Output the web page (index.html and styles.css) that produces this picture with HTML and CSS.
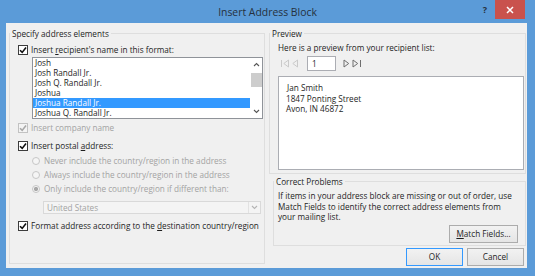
FILE: index.html
```html
<!DOCTYPE html>
<html lang="en">
<head>
  <meta charset="UTF-8">
  <meta name="viewport" content="width=device-width, initial-scale=1.0">
  <title>Insert Address Block</title>
  <link rel="stylesheet" href="styles.css">
</head>
<body>
<div class="window">
  <div class="titlebar">
    <div class="title">Insert Address Block</div>
    <button class="help">?</button>
    <button class="close">
      <svg width="8" height="8" viewBox="0 0 8 8"><path d="M1 1L7 7M7 1L1 7" stroke="#fff" stroke-width="1.5" fill="none"/></svg>
    </button>
  </div>

  <div class="content">
    <div class="col col-left">
      <fieldset class="group">
        <legend>Specify address elements</legend>

        <label class="check row-name">
          <span class="box"><svg viewBox="0 0 8 8"><path d="M1 4.2L3.2 6.4L7 1.4" stroke="#111" stroke-width="1.6" fill="none"/></svg></span>
          <span>Insert <u>r</u>ecipient's name in this format:</span>
        </label>

        <div class="listbox">
          <ul class="items">
            <li>Josh</li>
            <li>Josh Randall Jr.</li>
            <li>Josh Q. Randall Jr.</li>
            <li>Joshua</li>
            <li class="selected">Joshua Randall Jr.</li>
            <li>Joshua Q. Randall Jr.</li>
          </ul>
          <div class="scrollbar">
            <span class="arrow"><svg width="7" height="5" viewBox="0 0 7 5"><path d="M1 4L3.5 1.5L6 4" stroke="#555" stroke-width="1.1" fill="none"/></svg></span>
            <span class="thumb"></span>
            <span class="fill"></span>
            <span class="arrow"><svg width="7" height="5" viewBox="0 0 7 5"><path d="M1 1L3.5 3.5L6 1" stroke="#555" stroke-width="1.1" fill="none"/></svg></span>
          </div>
        </div>

        <label class="check disabled row-company">
          <span class="box"><svg viewBox="0 0 8 8"><path d="M1 4.2L3.2 6.4L7 1.4" stroke="#a8a8a8" stroke-width="1.6" fill="none"/></svg></span>
          <span>Insert company name</span>
        </label>

        <label class="check row-postal">
          <span class="box"><svg viewBox="0 0 8 8"><path d="M1 4.2L3.2 6.4L7 1.4" stroke="#111" stroke-width="1.6" fill="none"/></svg></span>
          <span>Insert postal <u>a</u>ddress:</span>
        </label>

        <div class="radios">
          <label class="radio"><span class="dot"></span><span>Never include the country/region in the address</span></label>
          <label class="radio"><span class="dot"></span><span>Always include the country/region in the address</span></label>
          <label class="radio"><span class="dot on"></span><span>Only include the country/region if different than:</span></label>
        </div>

        <div class="select">
          <span class="select-value">United States</span>
          <span class="select-arrow"><svg width="7" height="5" viewBox="0 0 7 5"><path d="M1 1L3.5 3.5L6 1" stroke="#b4b4b4" stroke-width="1.1" fill="none"/></svg></span>
        </div>

        <label class="check row-format">
          <span class="box"><svg viewBox="0 0 8 8"><path d="M1 4.2L3.2 6.4L7 1.4" stroke="#111" stroke-width="1.6" fill="none"/></svg></span>
          <span>Format address according to the <u>d</u>estination country/region</span>
        </label>
      </fieldset>
    </div>

    <div class="col col-right">
      <fieldset class="group preview-group">
        <legend>Preview</legend>
        <div class="note">Here is a preview from your recipient list:</div>
        <div class="nav">
          <svg class="nav-first" width="10" height="9" viewBox="0 0 10 9"><path d="M1.5 1V8" stroke="#cacaca" fill="none"/><path d="M8.5 1L3.8 4.5L8.5 8Z" stroke="#cacaca" fill="none"/></svg>
          <svg class="nav-prev" width="6" height="9" viewBox="0 0 6 9"><path d="M5.5 1L0.8 4.5L5.5 8Z" stroke="#cacaca" fill="none"/></svg>
          <span class="record">1</span>
          <svg class="nav-next" width="7" height="9" viewBox="0 0 7 9"><path d="M1 1L5.7 4.5L1 8Z" stroke="#6e6e6e" fill="none"/></svg>
          <svg class="nav-last" width="10" height="9" viewBox="0 0 10 9"><path d="M1 1L5.7 4.5L1 8Z" stroke="#6e6e6e" fill="none"/><path d="M8.5 1V8" stroke="#6e6e6e" fill="none"/></svg>
        </div>
        <div class="preview">
          <div class="first-line">Jan Smith</div>
          <div>1847 Ponting Street</div>
          <div>Avon, IN 46872</div>
        </div>
      </fieldset>

      <fieldset class="group problems">
        <legend>Correct Problems</legend>
        <p class="problems-text">If items in your address block are missing or out of order, use<br>Match Fields to identify the correct address elements from<br>your mailing list.</p>
        <div class="problems-actions">
          <button class="btn btn-match"><u>M</u>atch Fields...</button>
        </div>
      </fieldset>

      <div class="actions">
        <button class="btn btn-ok">OK</button>
        <button class="btn btn-cancel">Cancel</button>
      </div>
    </div>
  </div>
</div>
</body>
</html>
```

FILE: styles.css
```css
* {
  box-sizing: border-box;
}

body {
  margin: 0;
  font-family: "Open Sans", "Segoe UI", sans-serif;
  font-size: 8.2px;
  color: #1e1e1e;
}

u {
  text-decoration-thickness: 1px;
}

.window {
  width: 535px;
  height: 276px;
  background: #5b9bd8;
  display: flex;
  flex-direction: column;
  padding-bottom: 8px;
}

/* title bar */
.titlebar {
  height: 23px;
  flex-shrink: 0;
  display: flex;
}

.title {
  flex: 1;
  padding-left: 60px;
  text-align: center;
  font-size: 10.4px;
  line-height: 25px;
  color: #26313d;
}

.help {
  width: 20px;
  height: 19px;
  padding: 0;
  border: none;
  background: none;
  font: bold 9px "Open Sans", sans-serif;
  color: #26313d;
}

.close {
  width: 30px;
  height: 19px;
  margin-right: 10px;
  padding: 0;
  border: none;
  background: #c9524d;
  display: flex;
  align-items: center;
  justify-content: center;
}

/* dialog body */
.content {
  flex: 1;
  margin: 0 8px 0 6px;
  background: #f0f0f0;
  display: flex;
}

.col {
  display: flex;
  flex-direction: column;
}

.col-left {
  width: 259px;
}

.col-right {
  flex: 1;
}

.group {
  margin: 5px 0 0 3px;
  padding: 0;
  min-width: 0;
  border: 1px solid #dedede;
}

.group legend {
  padding: 0 2px;
  line-height: 11px;
}

.col-left .group {
  flex: 1;
  margin-bottom: 4px;
}

/* checkboxes */
.check {
  display: flex;
  align-items: center;
  gap: 3px;
  margin-left: 8px;
  line-height: 12px;
  white-space: nowrap;
}

.box {
  width: 10px;
  height: 10px;
  border: 1px solid #3c3c3c;
  background: #fff;
  display: flex;
  align-items: center;
  justify-content: center;
}

.box svg {
  width: 8px;
  height: 8px;
}

.check.disabled {
  color: #a3a3a3;
}

.check.disabled .box {
  border-color: #c2c2c2;
  background: #f4f4f4;
}

.row-name {
  margin-top: 5px;
}

.row-company {
  margin-top: 3px;
}

.row-postal {
  margin-top: 6px;
}

.row-format {
  margin-top: 6px;
}

/* list */
.listbox {
  margin: 1px 0 0 22px;
  width: 231px;
  height: 62px;
  border: 1px solid #8f9399;
  background: #fff;
  display: flex;
}

.items {
  flex: 1;
  margin: 0;
  padding: 0;
  list-style: none;
}

.items li {
  height: 10px;
  line-height: 10px;
  padding-left: 2px;
  white-space: nowrap;
}

.items li.selected {
  background: #3399ff;
  color: #fff;
}

.scrollbar {
  width: 12px;
  display: flex;
  flex-direction: column;
  align-items: center;
}

.scrollbar .arrow {
  height: 13px;
  display: flex;
  align-items: center;
  justify-content: center;
}

.thumb {
  width: 11px;
  height: 14px;
  margin-top: 2px;
  background: #cdcdcd;
}

.scrollbar .fill {
  flex: 1;
}

/* radios */
.radios {
  margin: 2px 0 0 22px;
}

.radio {
  display: flex;
  align-items: center;
  gap: 4px;
  line-height: 14px;
  color: #a3a3a3;
  white-space: nowrap;
}

.dot {
  width: 8px;
  height: 8px;
  border-radius: 50%;
  border: 1px solid #c6c6c6;
  background: #f5f5f5;
}

.dot.on {
  background: radial-gradient(circle, #a8a8a8 0 1.8px, #f5f5f5 2.4px);
}

/* country drop-down */
.select {
  margin: 5px 0 0 33px;
  width: 218px;
  height: 13px;
  border: 1px solid #d9d9d9;
  background: #f4f4f4;
  color: #a3a3a3;
  display: flex;
}

.select-value {
  flex: 1;
  padding-left: 3px;
  line-height: 11px;
}

.select-arrow {
  width: 12px;
  border-left: 1px solid #e2e2e2;
  display: flex;
  align-items: center;
  justify-content: center;
}

/* preview */
.col-right .group {
  margin: 5px 1px 0 4px;
}

.preview-group {
  padding-bottom: 3px;
}

.note {
  margin: 3px 0 0 8px;
  line-height: 12px;
}

.nav {
  height: 15px;
  margin: 2px 0 0 10px;
  display: flex;
  align-items: center;
}

.nav-prev {
  margin-left: 2px;
}

.record {
  width: 29px;
  height: 15px;
  margin-left: 9px;
  padding-left: 4px;
  border: 1px solid #abadb3;
  background: #fff;
  line-height: 13px;
}

.nav-next {
  margin-left: 7px;
}

.nav-last {
  margin-left: 2px;
}

.preview {
  height: 94px;
  margin: 5px 1px 0 8px;
  padding: 6px 0 0 7px;
  border: 1px solid #abadb3;
  background: #fff;
  line-height: 10.6px;
}

.first-line {
  padding-left: 1px;
}

/* correct problems */
.col-right .problems {
  margin: 2px 1px 0 8px;
  padding-bottom: 2px;
}

.problems-text {
  margin: 4px 0 0 4px;
  line-height: 10.6px;
  white-space: nowrap;
}

.problems-actions {
  display: flex;
  justify-content: flex-end;
  margin: 2px 7px 0 0;
}

/* buttons */
.btn {
  height: 18px;
  padding: 0;
  border: 1px solid #acacac;
  background: linear-gradient(#f2f2f2, #e5e5e5);
  font: inherit;
  color: #1e1e1e;
}

.btn-match {
  width: 69px;
}

.btn-ok,
.btn-cancel {
  width: 57px;
}

.btn-ok {
  border-color: #3399ff;
}

.actions {
  display: flex;
  justify-content: flex-end;
  gap: 4px;
  margin: 2px 3px 0 0;
}
```
